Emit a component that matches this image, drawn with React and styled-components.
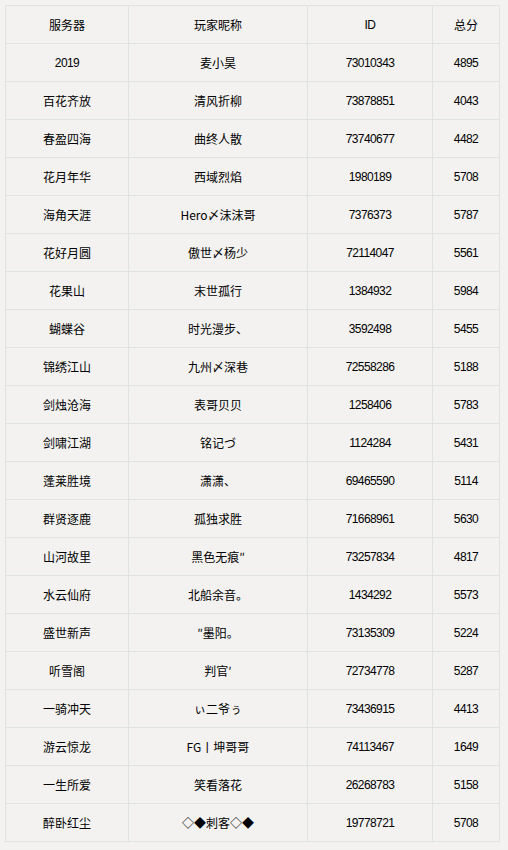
import React from 'react';
import styled, { createGlobalStyle } from 'styled-components';

const GlobalStyle = createGlobalStyle`
    html, body {
        margin: 0;
        padding: 0;
        background: #f3f2f0;
    }
    body {
        font-family: "Noto Sans CJK SC", "Liberation Sans", sans-serif;
        font-size: 12px;
        color: #000;
    }
`;

const Page = styled.div`
    padding: 5px 0 0 5px;
`;

const Table = styled.table`
    width: 494px;
    border-collapse: collapse;
    table-layout: fixed;
`;

const Cell = styled.td`
    height: 37px;
    padding: 0;
    border: 1px solid #dfe3e2;
    text-align: center;
    vertical-align: middle;
    line-height: 16px;
    font-family: ${props =>
        props.num
            ? '"Liberation Sans", "Noto Sans CJK SC", sans-serif'
            : '"Noto Sans CJK SC", "Liberation Sans", sans-serif'};
    font-size: 12px;
    letter-spacing: ${props => (props.num ? '-0.6px' : '0')};
`;

const HeadCell = styled(Cell).attrs({ as: 'th' })`
    font-weight: normal;
`;

const rows = [
    ['2019', '麦小昊', '73010343', '4895'],
    ['百花齐放', '清风折柳', '73878851', '4043'],
    ['春盈四海', '曲终人散', '73740677', '4482'],
    ['花月年华', '西域烈焰', '1980189', '5708'],
    ['海角天涯', 'Hero〆沫沫哥', '7376373', '5787'],
    ['花好月圆', '傲世〆杨少', '72114047', '5561'],
    ['花果山', '末世孤行', '1384932', '5984'],
    ['蝴蝶谷', '时光漫步、', '3592498', '5455'],
    ['锦绣江山', '九州〆深巷', '72558286', '5188'],
    ['剑烛沧海', '表哥贝贝', '1258406', '5783'],
    ['剑啸江湖', '铭记づ', '1124284', '5431'],
    ['蓬莱胜境', '潇潇、', '69465590', '5114'],
    ['群贤逐鹿', '孤独求胜', '71668961', '5630'],
    ['山河故里', '黑色无痕″', '73257834', '4817'],
    ['水云仙府', '北船余音。', '1434292', '5573'],
    ['盛世新声', '″墨阳。', '73135309', '5224'],
    ['听雪阁', '判官′', '72734778', '5287'],
    ['一骑冲天', 'ぃ二爷ぅ', '73436915', '4413'],
    ['游云惊龙', 'FG丨坤哥哥', '74113467', '1649'],
    ['一生所爱', '笑看落花', '26268783', '5158'],
    ['醉卧红尘', '◇◆刺客◇◆', '19778721', '5708'],
];

const App = () => (
    <Page>
        <GlobalStyle />
        <Table>
            <colgroup>
                <col style={{ width: 123 }} />
                <col style={{ width: 179 }} />
                <col style={{ width: 125 }} />
                <col style={{ width: 67 }} />
            </colgroup>
            <thead>
                <tr>
                    <HeadCell>服务器</HeadCell>
                    <HeadCell>玩家昵称</HeadCell>
                    <HeadCell num>ID</HeadCell>
                    <HeadCell>总分</HeadCell>
                </tr>
            </thead>
            <tbody>
                {rows.map(([server, name, id, score]) => (
                    <tr key={server + id}>
                        <Cell num={/^\d+$/.test(server)}>{server}</Cell>
                        <Cell>{name}</Cell>
                        <Cell num>{id}</Cell>
                        <Cell num>{score}</Cell>
                    </tr>
                ))}
            </tbody>
        </Table>
    </Page>
);

export default App;
